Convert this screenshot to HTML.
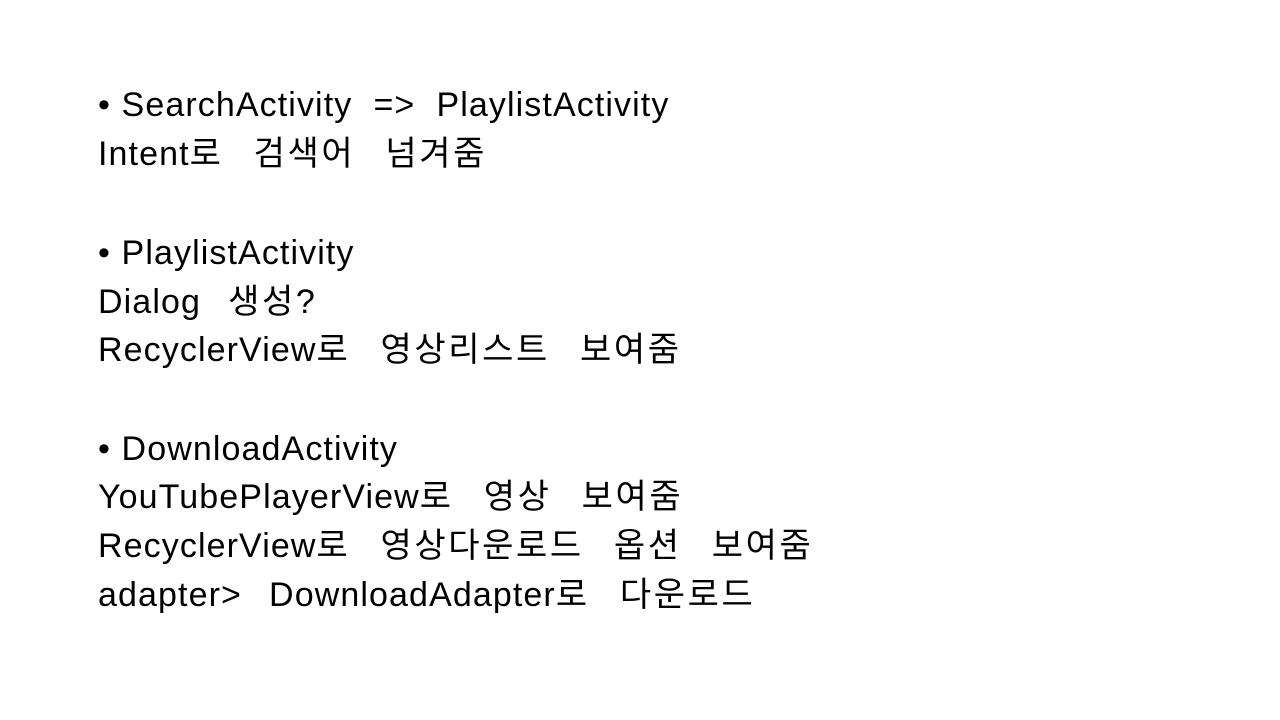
<!DOCTYPE html>
<html><head><meta charset="utf-8"><style>
html,body{margin:0;padding:0;background:#fff;width:1280px;height:720px;overflow:hidden}
.l{position:absolute;left:98px;font-family:"Liberation Sans","Noto Sans CJK KR","NanumGothic",sans-serif;font-size:34px;letter-spacing:1.1px;line-height:40px;color:#000;white-space:pre}
.k{word-spacing:3px}
.h{letter-spacing:2.6px}
</style></head><body>
<div class="l" style="top:85px">• SearchActivity  =&gt;  PlaylistActivity</div>
<div class="l k" style="top:134px">Intent<span class="h">로  검색어  넘겨줌</span></div>
<div class="l" style="top:233px">• PlaylistActivity</div>
<div class="l k" style="top:282px">Dialog  <span class="h">생성</span>?</div>
<div class="l k" style="top:330px">RecyclerView<span class="h">로  영상리스트  보여줌</span></div>
<div class="l" style="top:429px">• DownloadActivity</div>
<div class="l k" style="top:477px">YouTubePlayerView<span class="h">로  영상  보여줌</span></div>
<div class="l k" style="top:526px">RecyclerView<span class="h">로  영상다운로드  옵션  보여줌</span></div>
<div class="l k" style="top:575px">adapter&gt;  DownloadAdapter<span class="h">로  다운로드</span></div>
</body></html>
